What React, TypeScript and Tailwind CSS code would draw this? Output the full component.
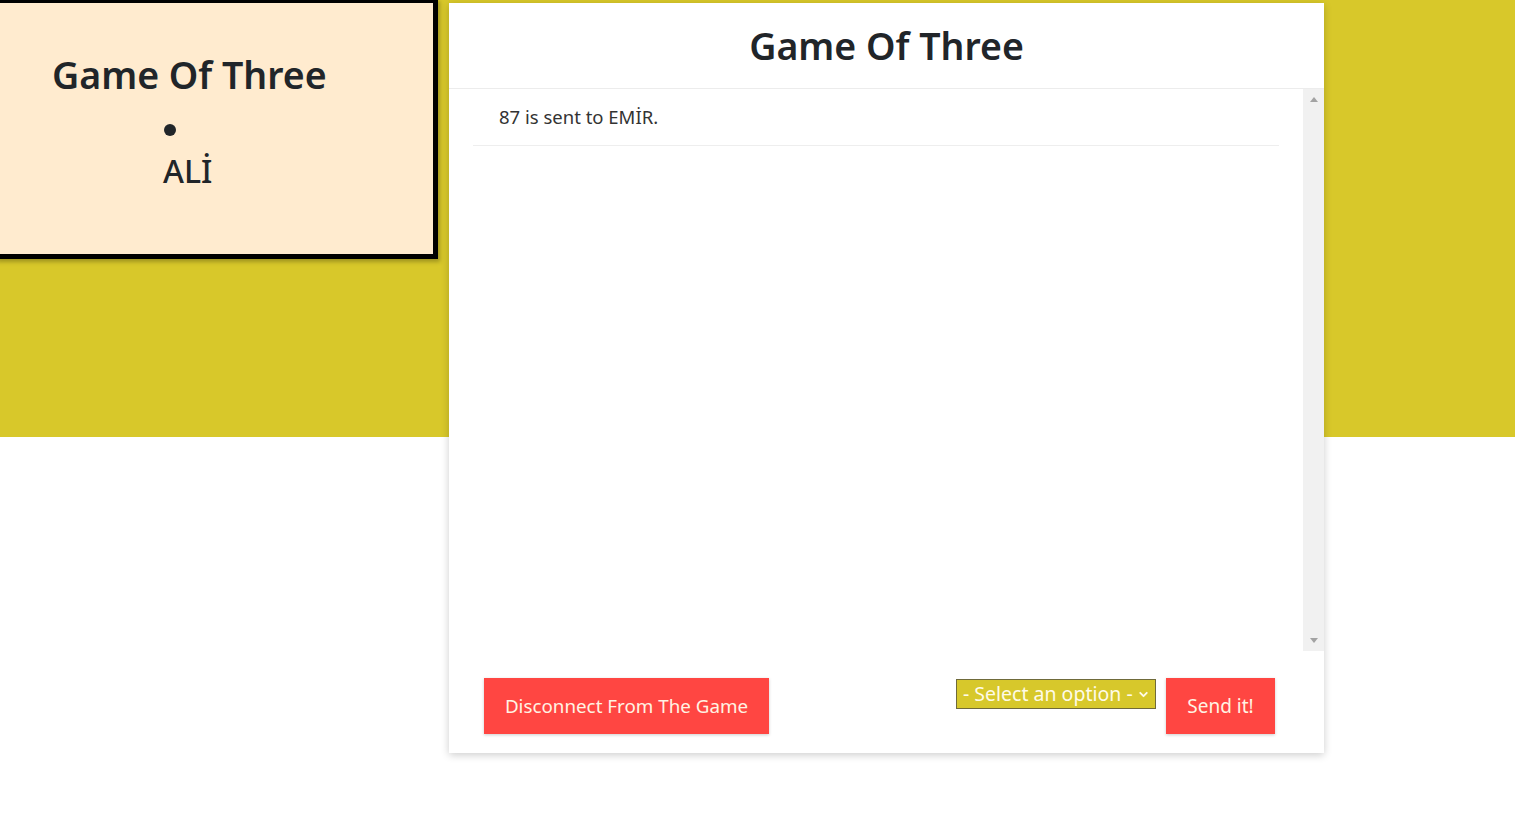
import { ChevronDown } from 'lucide-react'

const font = { fontFamily: '"Noto Sans", "Open Sans", sans-serif' }

function PlayerCard() {
  return (
    <div className="ml-[-5px] mt-[-2px] h-[261px] w-[443px] shrink-0 border-[5px] border-black bg-[#ffebcf] shadow-[2px_3px_4px_rgba(0,0,0,0.25)]">
      <div className="flex flex-col pl-[52px] pt-[49px] text-[#212529]">
        <h2 className="text-[37.5px] font-semibold leading-[46px]">Game Of Three</h2>
        <ul className="pl-[111px]">
          <li className="flex flex-col items-start">
            <span className="ml-[1px] mt-[26px] h-[12px] w-[12px] rounded-full bg-[#212529]" />
            <span className="mt-[15px] text-[32px] font-medium leading-[40px]">ALİ</span>
          </li>
        </ul>
      </div>
    </div>
  )
}

function Scrollbar() {
  return (
    <div className="flex w-[21px] shrink-0 flex-col items-center justify-between bg-[#f1f1f1] py-[8px]">
      <span className="h-0 w-0 border-x-[4px] border-b-[5px] border-x-transparent border-b-[#a3a3a3]" />
      <span className="h-0 w-0 border-x-[4px] border-t-[5px] border-x-transparent border-t-[#a3a3a3]" />
    </div>
  )
}

function GameBoard() {
  return (
    <div className="ml-[11px] mt-[3px] flex h-[750px] w-[875px] flex-col bg-white shadow-[0_2px_8px_rgba(0,0,0,0.2)]">
      <div className="flex h-[86px] items-center justify-center border-b border-[#ececec]">
        <h1 className="mt-[2px] text-[37.5px] font-semibold text-[#212529]">Game Of Three</h1>
      </div>
      <div className="flex h-[562px]">
        <div className="flex-1 pl-[24px] pr-[24px]">
          <div className="flex h-[57px] items-center border-b border-[#eeeeee] pl-[26px] text-[18.5px] text-[#333]">
            87 is sent to EMİR.
          </div>
        </div>
        <Scrollbar />
      </div>
      <div className="flex items-start justify-between pl-[35px] pr-[49px] pt-[27px]">
        <button className="h-[56px] w-[285px] bg-[#ff4642] text-[18.8px] text-[#fff3e3] shadow-[0_1px_3px_rgba(0,0,0,0.2)]">
          Disconnect From The Game
        </button>
        <div className="flex items-start gap-[10px]">
          <div className="mt-[1px] flex h-[30px] w-[200px] items-center justify-between border border-[#6f6a3a] bg-[#d7c82b] pl-[6px] pr-[5px] text-[19.5px] text-[#fffbe8]">
            <span>- Select an option -</span>
            <ChevronDown size={13} strokeWidth={3.5} />
          </div>
          <button className="h-[56px] w-[109px] bg-[#ff4642] text-[19px] text-[#fff3e3] shadow-[0_1px_3px_rgba(0,0,0,0.2)]">
            Send it!
          </button>
        </div>
      </div>
    </div>
  )
}

export default function App() {
  return (
    <div
      className="flex min-h-[829px] items-start overflow-hidden bg-[linear-gradient(to_bottom,#d8c82a_437px,#ffffff_437px)]"
      style={font}
    >
      <PlayerCard />
      <GameBoard />
    </div>
  )
}
